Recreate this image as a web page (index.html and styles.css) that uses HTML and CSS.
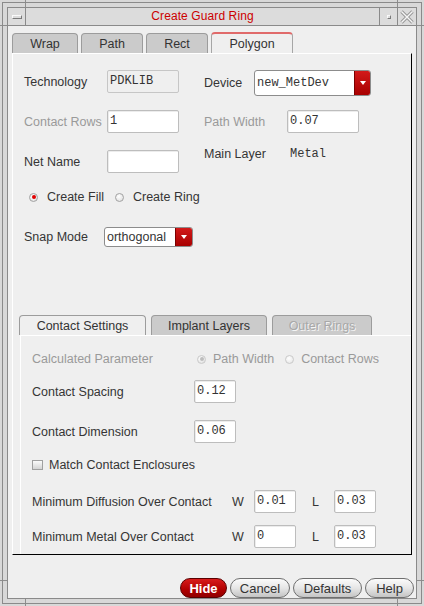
FILE: index.html
```html
<!DOCTYPE html>
<html>
<head>
<meta charset="utf-8">
<title>Create Guard Ring</title>
<link rel="stylesheet" href="styles.css">
</head>
<body>
<div class="frame">
 <div class="frame-in">
  <div class="window">
   <div class="titlebar">
     <div class="tb-btn tb-menu"><span class="dash"></span></div>
     <div class="title">Create Guard Ring</div>
     <div class="tb-btn tb-min"><span class="sq"></span></div>
     <div class="tb-btn tb-close"><svg width="14" height="14" viewBox="0 0 14 14"><path d="M1.5 1.5 L12.5 12.5 M12.5 1.5 L1.5 12.5" stroke="#9a9a9a" stroke-width="3.4" fill="none"/><path d="M1.5 1.5 L12.5 12.5 M12.5 1.5 L1.5 12.5" stroke="#f6f6f6" stroke-width="1.4" fill="none"/></svg></div>
   </div>
   <div class="client">
     <div class="tabs">
       <div class="tab t-wrap">Wrap</div>
       <div class="tab t-path">Path</div>
       <div class="tab t-rect">Rect</div>
       <div class="tab active t-poly">Polygon</div>
     </div>
     <div class="panel">
       <div class="form">
         <div class="row r1">
           <div class="cell c1"><span class="lbl l83">Technology</span><span class="field ro">PDKLIB</span></div>
           <div class="cell"><span class="lbl l50">Device</span><div class="combo combo-dev"><span class="ctext mono">new_MetDev</span><span class="cbtn"><span class="tri"></span></span></div></div>
         </div>
         <div class="row r2">
           <div class="cell c1"><span class="lbl l83 dis">Contact Rows</span><span class="field">1</span></div>
           <div class="cell"><span class="lbl l83 dis">Path Width</span><span class="field">0.07</span></div>
         </div>
         <div class="row r3">
           <div class="cell c1"><span class="lbl l83">Net Name</span><span class="field"></span></div>
           <div class="cell top"><span class="lbl l86 mainlbl">Main Layer</span><span class="mono metal">Metal</span></div>
         </div>
         <div class="radios">
           <span class="radio on"></span><span class="rlbl fill">Create Fill</span>
           <span class="radio"></span><span class="rlbl">Create Ring</span>
         </div>
         <div class="row snap">
           <span class="lbl l80">Snap Mode</span>
           <div class="combo combo-snap"><span class="ctext">orthogonal</span><span class="cbtn"><span class="tri"></span></span></div>
         </div>
       </div>
       <div class="subtabs">
         <div class="stab active s1">Contact Settings</div>
         <div class="stab s2">Implant Layers</div>
         <div class="stab disabled s3">Outer Rings</div>
       </div>
       <div class="subpanel">
         <div class="srow calc">
           <span class="lbl dis l165">Calculated Parameter</span>
           <span class="radio dison"></span><span class="rlbl dis pw">Path Width</span>
           <span class="radio disoff"></span><span class="rlbl dis">Contact Rows</span>
         </div>
         <div class="srow cs"><span class="lbl l162">Contact Spacing</span><span class="field sm">0.12</span></div>
         <div class="srow cd"><span class="lbl l162">Contact Dimension</span><span class="field sm">0.06</span></div>
         <div class="srow chk"><span class="check"></span><span class="clbl">Match Contact Enclosures</span></div>
         <div class="srow min1"><span class="lbl l200">Minimum Diffusion Over Contact</span><span class="wl">W</span><span class="field sm">0.01</span><span class="wl ll">L</span><span class="field sm">0.03</span></div>
         <div class="srow min2"><span class="lbl l200">Minimum Metal Over Contact</span><span class="wl">W</span><span class="field sm">0</span><span class="wl ll">L</span><span class="field sm">0.03</span></div>
       </div>
     </div>
     <div class="buttons">
       <div class="btn hide">Hide</div>
       <div class="btn cancel">Cancel</div>
       <div class="btn defaults">Defaults</div>
       <div class="btn help">Help</div>
     </div>
   </div>
  </div>
 </div>
</div>
</body>
</html>
```

FILE: styles.css
```css
* { box-sizing: border-box; }
html, body { margin: 0; padding: 0; }
body {
  width: 424px; height: 606px; overflow: hidden;
  background: #d8d8d8;
  font-family: "Liberation Sans", Arial, sans-serif;
  font-size: 12.5px; color: #353535;
}
.mono { font-family: "Liberation Mono", "Courier New", monospace; font-size: 12px; }

/* window frame */
.frame {
  width: 424px; height: 606px; padding: 2px;
  background:
    linear-gradient(#8e8e8e, #8e8e8e) 25px 0 / 1px 8px no-repeat,
    linear-gradient(#8e8e8e, #8e8e8e) 397px 0 / 1px 8px no-repeat,
    linear-gradient(#8e8e8e, #8e8e8e) 25px 598px / 1px 8px no-repeat,
    linear-gradient(#8e8e8e, #8e8e8e) 397px 598px / 1px 8px no-repeat,
    linear-gradient(#8e8e8e, #8e8e8e) 0 25px / 8px 1px no-repeat,
    linear-gradient(#8e8e8e, #8e8e8e) 416px 25px / 8px 1px no-repeat,
    linear-gradient(#8e8e8e, #8e8e8e) 0 580px / 8px 1px no-repeat,
    linear-gradient(#8e8e8e, #8e8e8e) 416px 580px / 8px 1px no-repeat,
    #d8d8d8;
}
.frame-in { height: 100%; border: 1px solid #8a8a8a; padding: 4px; }
.window { height: 100%; border: 1px solid #8a8a8a; display: flex; flex-direction: column; background: #efefef; }

.titlebar { height: 18px; flex: none; display: flex; background: #dcdcdc; border-bottom: 1px solid #8a8a8a; }
.tb-btn { display: flex; align-items: center; justify-content: center; }
.tb-menu { width: 18px; border-right: 1px solid #8a8a8a; }
.tb-min { width: 18px; border-left: 1px solid #8a8a8a; }
.tb-close { width: 19px; border-left: 1px solid #8a8a8a; }
.dash { width: 10px; height: 4px; border: 1px solid; border-color: #fafafa #7a7a7a #7a7a7a #fafafa; background: #dcdcdc; }
.sq { width: 4px; height: 4px; border: 1px solid; border-color: #fafafa #7a7a7a #7a7a7a #fafafa; }
.title { flex: 1; text-align: center; color: #cc0000; font-size: 12px; line-height: 17px; letter-spacing: 0.1px; }

.client { flex: 1; display: flex; flex-direction: column; padding: 6px 0 0 4px; }

/* main tabs */
.tabs { display: flex; gap: 3px; align-items: flex-end; height: 21px; }
.tab {
  height: 20px; border: 1px solid #9c9c9c; border-bottom: 0; border-radius: 4px 4px 0 0;
  background: #cbcbcb; display: flex; align-items: center; justify-content: center;
  font-size: 12.5px; color: #333; padding-top: 1px;
}
.t-wrap { width: 66px; }
.t-path { width: 62px; }
.t-rect { width: 62px; }
.t-poly { width: 82px; }
.tab.active { height: 21px; background: #efefef; border-top: 2px solid #e06a6a; border-color: #e06a6a #a6a6a6 #a6a6a6; padding-top: 0; }

.panel {
  width: 400px; height: 502px; flex: none;
  border-top: 1px solid #ffffff; border-left: 1px solid #ffffff;
  border-right: 1px solid #000; border-bottom: 1px solid #000;
  display: flex; flex-direction: column;
}
.form { padding: 16px 0 0 11px; }
.row { display: flex; align-items: flex-start; }
.cell { display: flex; align-items: center; }
.cell.top { align-items: flex-start; }
.c1 { width: 180px; }
.r2 { margin-top: 14px; }
.r3 { margin-top: 17px; }
.lbl { white-space: nowrap; }
.l50 { width: 50px; }
.l80 { width: 80px; }
.l83 { width: 83px; }
.l86 { width: 86px; }
.l162 { width: 162px; }
.l165 { width: 165px; }
.l200 { width: 200px; }
.dis { color: #9a9a9a; }
.mainlbl, .metal { margin-top: -3px; }

.field {
  width: 72px; height: 23px; background: #fff;
  border: 1px solid #bdbdbd; border-radius: 2px;
  box-shadow: inset 1px 1px 0 #ececec;
  font-family: "Liberation Mono", "Courier New", monospace; font-size: 12px; color: #333;
  padding: 0 0 0 2px; line-height: 21px; white-space: pre;
}
.field.ro { background: #efefef; border-color: #c6c6c6; box-shadow: none; }
.field.sm { width: 42px; }

.combo {
  display: flex; align-items: center; background: #fff;
  border: 1px solid #8c8c8c; border-radius: 3px; overflow: hidden;
}
.combo-dev { width: 117px; height: 26px; }
.combo-snap { width: 89px; height: 20px; }
.ctext { flex: 1; padding-left: 2px; white-space: nowrap; }
.cbtn {
  width: 16px; align-self: stretch; display: flex; align-items: center; justify-content: center;
  background: linear-gradient(#d21a1a, #a80000); border-left: 1px solid #7a0000;
}
.combo-snap .cbtn { width: 17px; }
.tri { width: 0; height: 0; border-left: 3px solid transparent; border-right: 3px solid transparent; border-top: 4px solid #fff; }

/* radios */
.radios { display: flex; align-items: center; height: 16px; margin-top: 16px; margin-left: 5px; }
.radio {
  width: 9px; height: 9px; border-radius: 50%; flex: none;
  border: 1px solid #a2a2a2; background: radial-gradient(circle at 40% 35%, #ffffff, #dadada);
  display: flex; align-items: center; justify-content: center;
}
.radio.on::after { content: ""; width: 4px; height: 4px; border-radius: 50%; background: #e00000; }
.radio.dison { border-color: #cacaca; }
.radio.dison::after { content: ""; width: 4px; height: 4px; border-radius: 50%; background: #bdbdbd; }
.radio.disoff { border-color: #cacaca; background: radial-gradient(circle at 40% 35%, #ffffff, #e2e2e2); }
.rlbl { margin-left: 9px; margin-right: 11px; white-space: nowrap; }
.snap { margin-top: 22px; align-items: center; }

/* sub tabs */
.subtabs { display: flex; gap: 5px; align-items: flex-end; height: 20px; margin: 68px 0 0 6px; }
.stab {
  height: 20px; border: 1px solid #9c9c9c; border-bottom: 0; border-radius: 4px 4px 0 0;
  background: #cbcbcb; display: flex; align-items: center; justify-content: center; color: #333;
}
.stab.active { background: #efefef; }
.stab.disabled { color: #a8a8a8; text-shadow: 1px 1px 0 #f4f4f4; }
.s1 { width: 127px; }
.s2 { width: 116px; }
.s3 { width: 100px; }

.subpanel {
  flex: 1; margin-left: 7px;
  border-top: 1px solid #ffffff; border-left: 1px solid #ffffff;
  padding: 15px 0 0 11px;
}
.srow { display: flex; align-items: center; }
.calc { height: 16px; }
.calc .rlbl { margin-left: 7px; }
.calc .pw { margin-right: 11px; }
.cs { margin-top: 13px; }
.cd { margin-top: 17px; }
.chk { margin-top: 14px; height: 16px; }
.check {
  width: 11px; height: 10px; border: 1px solid #a0a0a0;
  background: linear-gradient(#fbfbfb, #d4d4d4); flex: none;
}
.clbl { margin-left: 6px; }
.min1 { margin-top: 17px; }
.min2 { margin-top: 12px; }
.wl { width: 22px; }
.ll { margin-left: 16px; }

/* bottom buttons */
.buttons { display: flex; justify-content: flex-end; gap: 3px; margin-top: 23px; padding-right: 2px; height: 20px; }
.btn {
  height: 20px; border: 1px solid #6e6e6e; border-radius: 10px;
  background: linear-gradient(#fbfbfb, #e6e6e6 50%, #c4c4c4);
  display: flex; align-items: center; justify-content: center;
  font-size: 13px; color: #333;
}
.hide { width: 47px; background: linear-gradient(#d81c1c, #b00000 60%, #900000); border-color: #5a0000; color: #fff; font-weight: bold; }
.cancel { width: 60px; }
.defaults { width: 69px; }
.help { width: 49px; }
```
